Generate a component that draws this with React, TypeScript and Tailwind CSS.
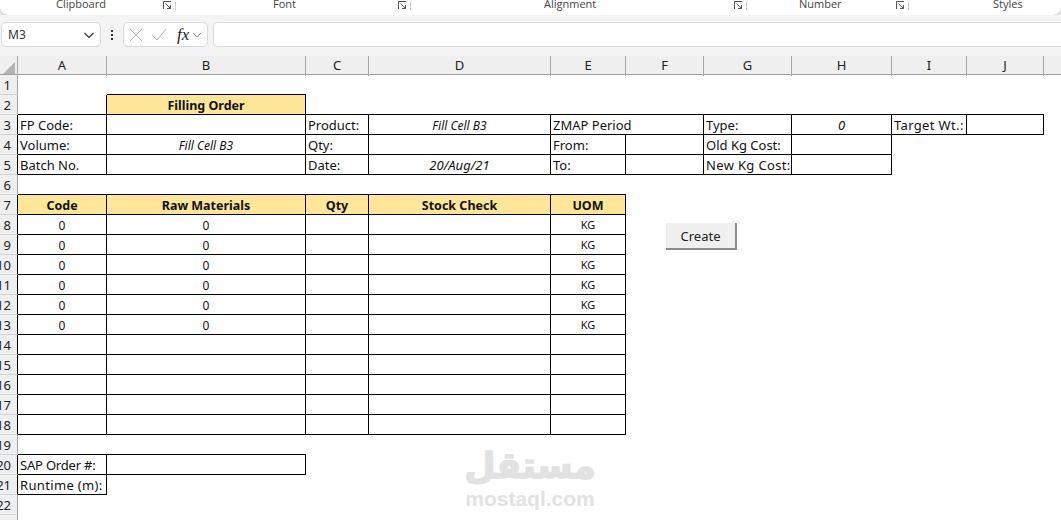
import React from "react";

const font = "font-['Noto_Sans',sans-serif]";
const cols = ["A", "B", "C", "D", "E", "F", "G", "H", "I", "J"];
const gridCols =
  "grid grid-cols-[18px_89px_199px_63px_182px_75px_78px_88px_100px_75px_77px_17px]";

type CellDef = {
  text?: string;
  kind?: "label" | "wide" | "tight" | "head" | "mid" | "small" | "date" | "ital";
  box?: "rb" | "b" | "none";
  span?: boolean;
};

const box = (text = "", kind: CellDef["kind"] = "label"): CellDef => ({ text, kind, box: "rb" });
const line: CellDef = { box: "b" };
const none: CellDef = { box: "none" };

function tableRow(code: string, name: string, uom: string): CellDef[] {
  return [box(code, "mid"), box(name, "mid"), box(), box(), box(uom, "small"), none, none, none, none, none, none];
}

const rows: { black: boolean; cells: CellDef[] }[] = [
  { black: false, cells: [none, line, none, none, none, none, none, none, none, none, none] },
  {
    black: false,
    cells: [box(), box("Filling Order", "head"), line, line, line, line, line, line, line, line, none],
  },
  {
    black: true,
    cells: [
      box("FP Code:"),
      box(),
      box("Product:"),
      box("Fill Cell B3", "ital"),
      { text: "ZMAP Period", kind: "label", box: "rb", span: true },
      box("Type:"),
      box("0", "date"),
      box("Target Wt.:", "wide"),
      box(),
      none,
    ],
  },
  {
    black: true,
    cells: [
      box("Volume:"),
      box("Fill Cell B3", "ital"),
      box("Qty:"),
      box(),
      box("From:"),
      box(),
      box("Old Kg Cost:"),
      box(),
      none,
      none,
      none,
    ],
  },
  {
    black: true,
    cells: [
      box("Batch No."),
      box(),
      box("Date:"),
      box("20/Aug/21", "date"),
      box("To:"),
      box(),
      box("New Kg Cost:", "wide"),
      box(),
      none,
      none,
      none,
    ],
  },
  { black: false, cells: [line, line, line, line, line, none, none, none, none, none, none] },
  {
    black: true,
    cells: [
      box("Code", "head"),
      box("Raw Materials", "head"),
      box("Qty", "head"),
      box("Stock Check", "head"),
      box("UOM", "head"),
      none,
      none,
      none,
      none,
      none,
      none,
    ],
  },
  ...[0, 1, 2, 3, 4, 5].map(() => ({ black: true, cells: tableRow("0", "0", "KG") })),
  ...[0, 1, 2, 3, 4].map(() => ({ black: true, cells: tableRow("", "", "") })),
  { black: false, cells: [line, line, none, none, none, none, none, none, none, none, none] },
  {
    black: true,
    cells: [box("SAP Order #:", "tight"), box(), none, none, none, none, none, none, none, none, none],
  },
  { black: true, cells: [box("Runtime (m):", "wide"), none, none, none, none, none, none, none, none, none, none] },
  { black: false, cells: [none, none, none, none, none, none, none, none, none, none, none] },
  { black: false, cells: [none, none, none, none, none, none, none, none, none, none, none] },
];

function Cell({ cell }: { cell: CellDef }) {
  const border =
    cell.box === "rb"
      ? "border-r border-b border-black"
      : cell.box === "b"
        ? "border-b border-black"
        : "";
  const kind =
    cell.kind === "head"
      ? "justify-center font-bold text-[12.5px] bg-[#ffe699] pt-[3px]"
      : cell.kind === "mid"
        ? "justify-center text-[12px] pt-[2px]"
        : cell.kind === "small"
          ? "justify-center text-[11px] pt-[2px]"
          : cell.kind === "ital"
            ? "justify-center italic text-[12px] pt-[2px]"
            : cell.kind === "date"
              ? "justify-center italic text-[13px] pt-[2px]"
              : cell.kind === "wide"
                ? "pl-[2px] text-[13px] tracking-[0.35px] pt-[2px]"
                : cell.kind === "tight"
                  ? "pl-[2px] text-[13px] tracking-[-0.2px] pt-[2px]"
                  : "pl-[2px] text-[13px] pt-[2px]";
  return (
    <div
      className={`flex items-center h-5 overflow-hidden whitespace-nowrap text-[#111] ${border} ${kind} ${
        cell.span ? "col-span-2" : ""
      }`}
    >
      {cell.text}
    </div>
  );
}

function Launcher() {
  return (
    <svg width="9" height="9" viewBox="0 0 9 9" fill="none" stroke="#555" strokeWidth="1">
      <path d="M0.5 8V0.5H8" />
      <path d="M2.5 2.5L7.5 7.5M7.5 4V7.5H4" />
    </svg>
  );
}

function Ribbon() {
  const groups: [string, string, boolean][] = [
    ["Clipboard", "w-[176px] pl-[56px]", true],
    ["Font", "w-[235px] pl-[97px]", true],
    ["Alignment", "w-[336px] pl-[133px]", true],
    ["Number", "w-[162px] pl-[52px]", true],
    ["Styles", "flex-1 pl-[84px]", false],
  ];
  return (
    <div className="h-[15px] bg-white rounded-b-lg shadow-[0_1px_3px_rgba(0,0,0,0.25)] flex overflow-hidden">
      {groups.map(([name, cls, launch]) => (
        <div key={name} className={`relative h-[15px] ${cls}`}>
          <span className="block text-[11px] leading-[11px] -mt-[2px] text-[#444] font-['Open_Sans',sans-serif]">
            {name}
          </span>
          {launch && (
            <span className="absolute right-0 top-[1px] flex items-center gap-[3px]">
              <Launcher />
              <span className="w-px h-[8px] bg-[#ccc]" />
            </span>
          )}
        </div>
      ))}
    </div>
  );
}

function FormulaBar() {
  return (
    <div className="h-[41px] flex items-start pt-[7px] bg-[#f3f3f3]">
      <div className="ml-[1px] w-[100px] h-[25px] rounded-[5px] bg-white border border-[#dcdcdc] flex items-center justify-between pl-[6px] pr-[5px]">
        <span className="text-[12px] text-[#333]">M3</span>
        <svg width="12" height="12" viewBox="0 0 12 12" fill="none" stroke="#333" strokeWidth="1.2">
          <path d="M1.5 4L6 8.5L10.5 4" />
        </svg>
      </div>
      <div className="w-[22px] h-[25px] flex flex-col items-center justify-center gap-[2px]">
        <span className="w-[2px] h-[2px] bg-[#333]" />
        <span className="w-[2px] h-[2px] bg-[#333]" />
        <span className="w-[2px] h-[2px] bg-[#333]" />
      </div>
      <div className="w-[85px] h-[25px] rounded-[5px] bg-white border border-[#dcdcdc] flex items-center pl-[5px]">
        <svg width="14" height="14" viewBox="0 0 14 14" fill="none" stroke="#b5b5b5" strokeWidth="1">
          <path d="M1 1L13 13M13 1L1 13" />
        </svg>
        <svg className="ml-[8px]" width="16" height="14" viewBox="0 0 16 14" fill="none" stroke="#b5b5b5" strokeWidth="1">
          <path d="M1 7L6 12L15 1" />
        </svg>
        <span className="ml-[10px] text-[17px] italic font-['Liberation_Serif',serif] text-[#222] leading-none">
          fx
        </span>
        <svg className="ml-[3px]" width="10" height="10" viewBox="0 0 10 10" fill="none" stroke="#8a8a8a" strokeWidth="1">
          <path d="M1 3L5 7L9 3" />
        </svg>
      </div>
      <div className="ml-[5px] flex-1 h-[25px] rounded-l-[5px] bg-white border border-r-0 border-[#dcdcdc]" />
    </div>
  );
}

function ColumnHeader() {
  return (
    <div className={`${gridCols} h-[19px] bg-[#efefef] border-b border-[#9e9e9e]`}>
      <div className="relative border-r border-[#a8a8a8]">
        <svg className="absolute right-[2px] bottom-[2px]" width="12" height="12" viewBox="0 0 12 12">
          <path d="M12 0V12H0Z" fill="#b4b4b4" />
        </svg>
      </div>
      {cols.map((c) => (
        <div key={c} className="flex items-center justify-center text-[13px] text-[#222] border-r border-[#a8a8a8]">
          {c}
        </div>
      ))}
      <div className="col-span-1" />
    </div>
  );
}

export default function App() {
  return (
    <div className={`relative w-[1061px] h-[520px] overflow-hidden bg-white ${font}`}>
      <div className="bg-[#f3f3f3] h-[15px]">
        <Ribbon />
      </div>
      <FormulaBar />
      <ColumnHeader />
      <div className={gridCols}>
        {rows.map((row, i) => (
          <React.Fragment key={i}>
            <div
              className={`h-5 pt-[2px] bg-[#efefef] flex items-center justify-end pr-[6px] text-[13px] text-[#222] border-b border-b-[#d4d4d4] border-r ${
                row.black ? "border-r-black" : "border-r-[#a8a8a8]"
              }`}
            >
              {i + 1}
            </div>
            {row.cells.map((cell, j) => (
              <Cell key={j} cell={cell} />
            ))}
          </React.Fragment>
        ))}
      </div>
      <button className="absolute left-[666px] top-[223px] w-[71px] h-[27px] pt-[2px] bg-[#f0f0f0] border-r-2 border-b-2 border-[#8c8c8c] text-[13px] text-[#222] flex items-center justify-center">
        Create
      </button>
      <div className="absolute left-[465px] top-[443px] w-[130px] flex flex-col items-center pointer-events-none select-none">
        <span className="text-[36px] leading-[46px] font-bold text-[#e2e2e2] [-webkit-text-stroke:1.5px_#e2e2e2] font-['DejaVu_Sans',sans-serif]">
          مستقل
        </span>
        <span className="text-[21px] leading-[20px] font-bold text-[#e2e2e2] font-['Liberation_Sans',sans-serif]">
          mostaql.com
        </span>
      </div>
    </div>
  );
}
